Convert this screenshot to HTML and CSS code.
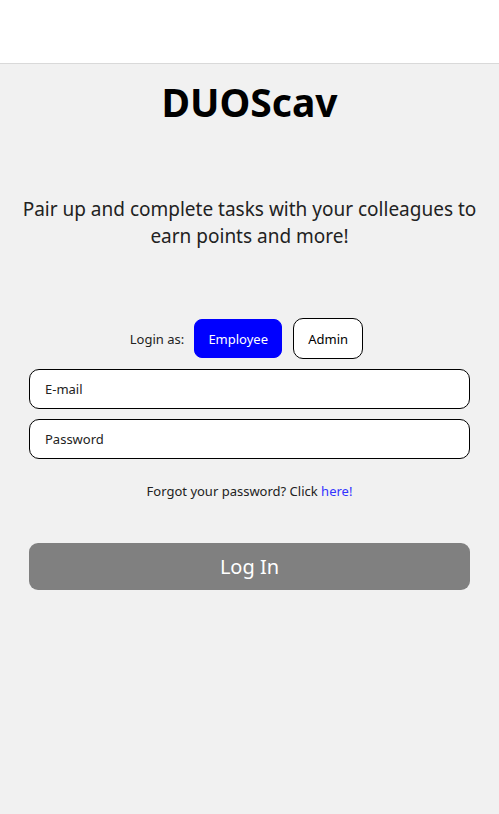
FILE: index.html
```html
<!DOCTYPE html>
<html lang="en">
<head>
<meta charset="utf-8">
<title>DUOScav</title>
<link rel="stylesheet" href="styles.css">
</head>
<body>
<header class="topbar"></header>
<main class="page">
  <h1 class="title">DUOScav</h1>
  <p class="tagline">Pair up and complete tasks with your colleagues to earn points and more!</p>
  <form class="login">
    <div class="role-row">
      <span class="role-label">Login as:</span>
      <button type="button" class="role-btn role-active">Employee</button>
      <button type="button" class="role-btn">Admin</button>
    </div>
    <input class="field" type="email" placeholder="E-mail">
    <input class="field" type="password" placeholder="Password">
    <p class="forgot">Forgot your password? Click <a href="#" class="forgot-link">here!</a></p>
    <button type="button" class="submit">Log In</button>
  </form>
</main>
</body>
</html>
```
FILE: styles.css
```css
html, body {
  margin: 0;
  padding: 0;
}
body {
  background: #f1f1f1;
  font-family: "Noto Sans", "Open Sans", sans-serif;
  color: #222;
  min-height: 814px;
}
.topbar {
  height: 63px;
  background: #fff;
  border-bottom: 1px solid #d9d9d9;
}
.page {
  padding: 0 29px;
  display: flex;
  flex-direction: column;
}
.title {
  margin: 14px 0 0;
  font-size: 39px;
  line-height: 48px;
  font-weight: 700;
  color: #000;
  text-align: center;
}
.tagline {
  margin: 70px -10px 0;
  font-size: 19px;
  line-height: 27px;
  text-align: center;
  color: #222;
}
.login {
  margin-top: 68px;
  display: flex;
  flex-direction: column;
}
.role-row {
  display: flex;
  justify-content: center;
  align-items: center;
  gap: 11px;
  height: 41px;
  padding-right: 6px;
}
.role-label {
  font-size: 13px;
  color: #222;
  margin-right: -1px;
}
.role-btn {
  font-family: inherit;
  font-size: 13px;
  color: #000;
  background: #fff;
  border: 1px solid #000;
  border-radius: 10px;
  height: 41px;
  width: 70px;
  padding: 0;
  cursor: pointer;
}
.role-active {
  background: #0000ff;
  color: #fff;
  border-color: #0000ff;
  width: 88px;
  height: 39px;
  border-radius: 8px;
}
.field {
  box-sizing: border-box;
  height: 40px;
  width: 100%;
  margin-top: 10px;
  border: 1px solid #000;
  border-radius: 10px;
  background: #fff;
  padding: 0 15px;
  font-family: inherit;
  font-size: 13px;
  color: #222;
}
.field::placeholder {
  color: #222;
}
.forgot {
  margin: 23px 0 0;
  font-size: 13px;
  line-height: 18px;
  text-align: center;
  color: #222;
}
.forgot-link {
  color: #3333ff;
  text-decoration: none;
}
.submit {
  margin-top: 43px;
  height: 47px;
  width: 100%;
  border: none;
  border-radius: 9px;
  background: #808080;
  color: #fff;
  font-family: inherit;
  font-size: 20px;
  cursor: pointer;
}
```
